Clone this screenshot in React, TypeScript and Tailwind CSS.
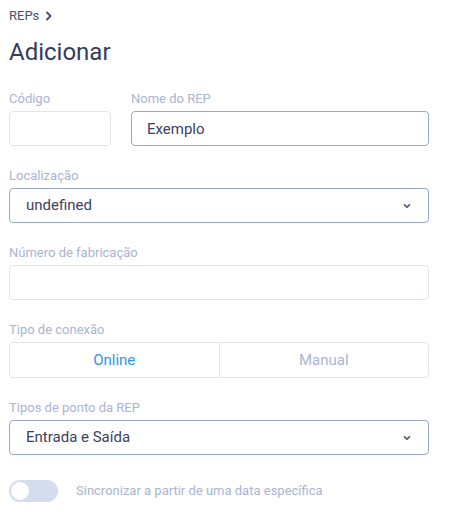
import { useState } from "react";

function Label({ children }: { children: React.ReactNode }) {
  return (
    <label className="block h-4 text-[13px] leading-4 text-[#a9b5d2]">
      {children}
    </label>
  );
}

function Chevron() {
  return (
    <svg width="10" height="10" viewBox="0 0 10 10" className="text-[#4f5875]">
      <path
        d="M2.5 3.8 L5 6.2 L7.5 3.8"
        fill="none"
        stroke="currentColor"
        strokeWidth="1.6"
        strokeLinecap="round"
        strokeLinejoin="round"
      />
    </svg>
  );
}

function SelectBox({ value }: { value: string }) {
  return (
    <div className="mt-1 flex h-[35px] items-center justify-between rounded-[4px] border border-[#9aa8c9] pl-4 pr-4 text-[15px] text-[#3b4262]">
      <span>{value}</span>
      <Chevron />
    </div>
  );
}

export default function App() {
  const [mode, setMode] = useState<"online" | "manual">("online");
  const [sync, setSync] = useState(false);

  return (
    <div
      className="min-h-screen bg-white pl-[9px] pr-[25px] pt-[8px]"
      style={{ fontFamily: "Roboto, 'Liberation Sans', sans-serif" }}
    >
      {/* Breadcrumb */}
      <div className="flex h-4 items-center gap-[6px] text-[13px] text-[#4a5170]">
        <span>REPs</span>
        <svg width="8" height="10" viewBox="0 0 8 10">
          <path
            d="M2 1.5 L5.5 5 L2 8.5"
            fill="none"
            stroke="#4a5170"
            strokeWidth="1.9"
            strokeLinecap="round"
            strokeLinejoin="round"
          />
        </svg>
      </div>

      <h1 className="mt-[14px] text-[24px] leading-7 text-[#353b58]">Adicionar</h1>

      <form className="mt-[25px] flex w-[420px] flex-col gap-[22px]">
        <div className="flex gap-5">
          <div className="w-[102px]">
            <Label>Código</Label>
            <input className="mt-1 h-[35px] w-full rounded-[4px] border border-[#dfe5ef] px-3 text-[15px] outline-none" />
          </div>
          <div className="flex-1">
            <Label>Nome do REP</Label>
            <input
              defaultValue="Exemplo"
              className="mt-1 h-[35px] w-full rounded-[4px] border border-[#9aa8c9] px-[15px] text-[15px] text-[#3b4262] outline-none"
            />
          </div>
        </div>

        <div>
          <Label>Localização</Label>
          <SelectBox value="undefined" />
        </div>

        <div>
          <Label>Número de fabricação</Label>
          <input className="mt-1 h-[35px] w-full rounded-[4px] border border-[#dfe5ef] px-4 text-[15px] outline-none" />
        </div>

        <div>
          <Label>Tipo de conexão</Label>
          <div className="mt-1 flex h-[36px] overflow-hidden rounded-[4px] border border-[#dfe5ef] text-[15px]">
            <button
              type="button"
              onClick={() => setMode("online")}
              className={`flex-1 border-r border-[#dfe5ef] ${mode === "online" ? "text-[#2d95f0]" : "text-[#a9b5d2]"}`}
            >
              Online
            </button>
            <button
              type="button"
              onClick={() => setMode("manual")}
              className={`flex-1 ${mode === "manual" ? "text-[#2d95f0]" : "text-[#a9b5d2]"}`}
            >
              Manual
            </button>
          </div>
        </div>

        <div>
          <Label>Tipos de ponto da REP</Label>
          <SelectBox value="Entrada e Saída" />
        </div>

        <div className="mt-[3px] flex items-center gap-[18px]">
          <button
            type="button"
            onClick={() => setSync(!sync)}
            className="flex h-[22px] w-[49px] items-center rounded-full bg-[#d3ddee] px-[2px]"
          >
            <span
              className={`h-[18px] w-[18px] rounded-full bg-white ${sync ? "ml-auto" : ""}`}
            />
          </button>
          <span className="text-[13px] text-[#a9b5d2]">
            Sincronizar a partir de uma data específica
          </span>
        </div>
      </form>
    </div>
  );
}
